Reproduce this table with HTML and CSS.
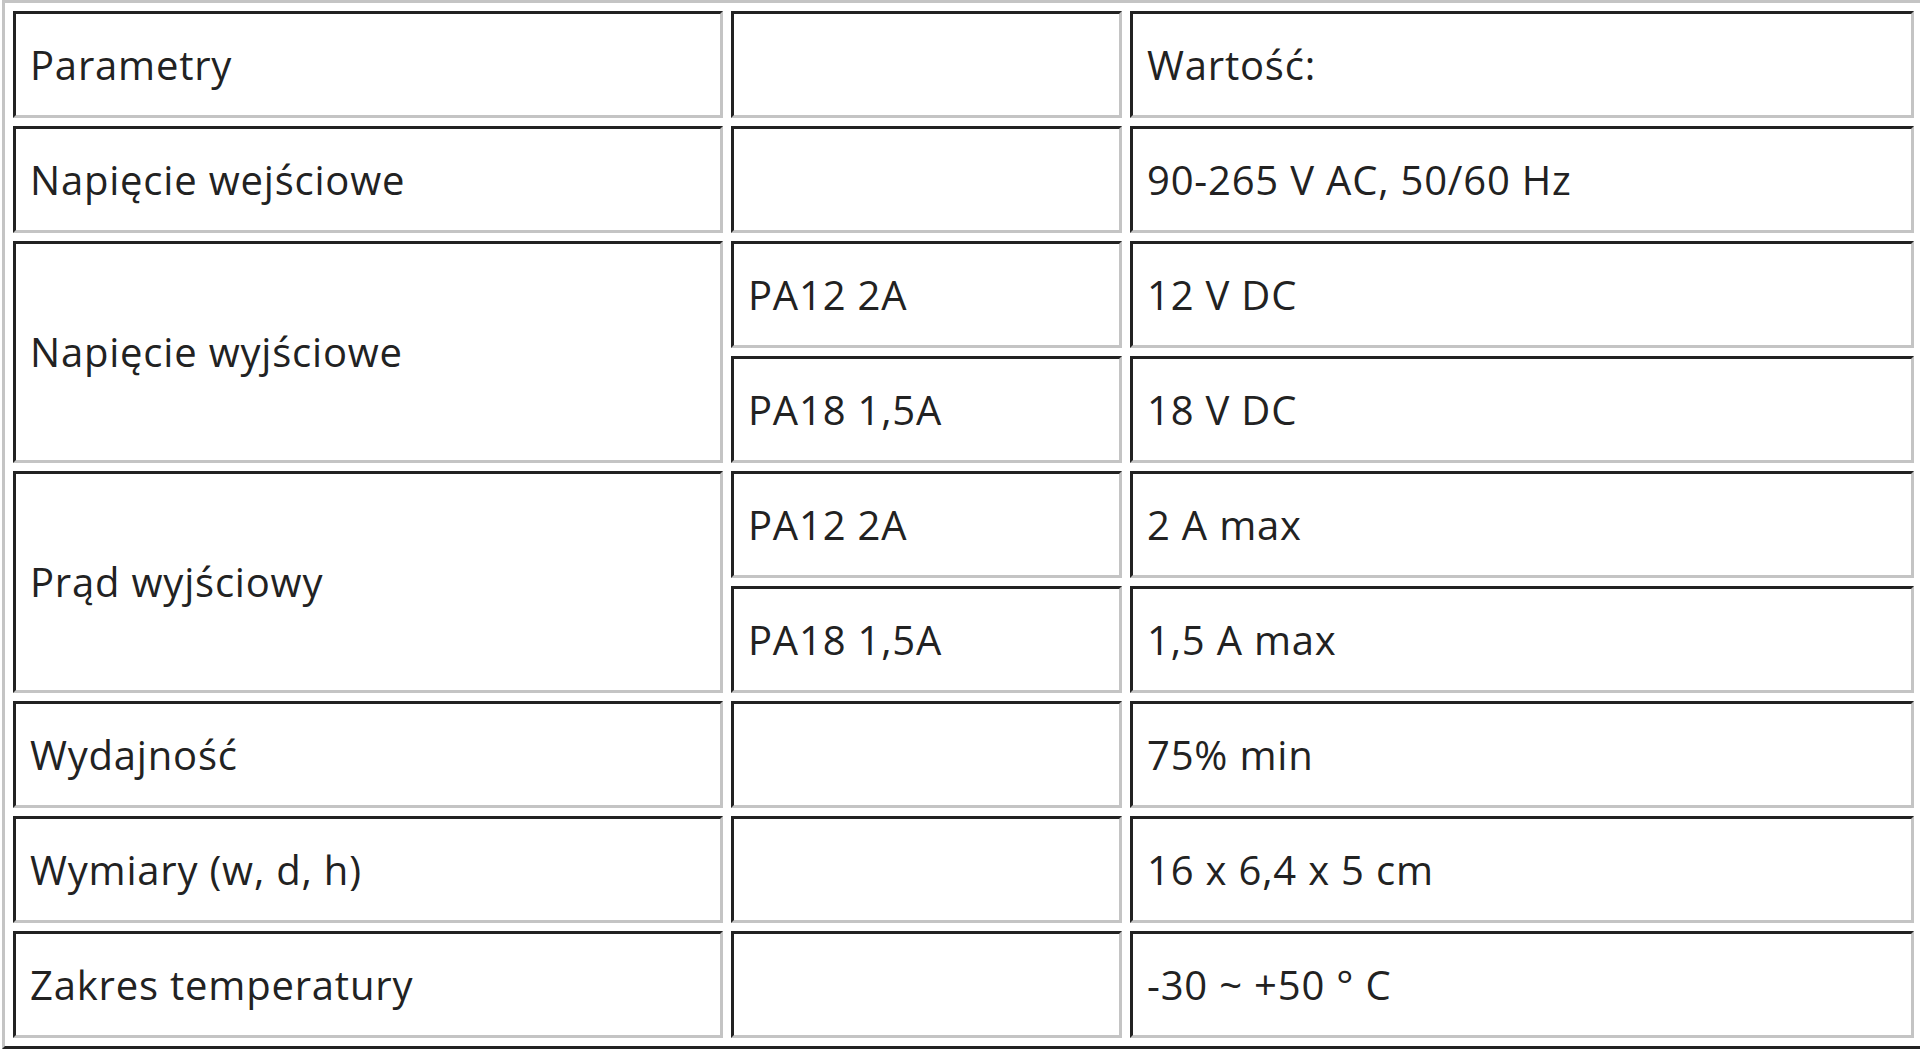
FILE: index.html
```html
<!DOCTYPE html>
<html lang="pl">
<head>
<meta charset="utf-8">
<title>Parametry</title>
<link rel="stylesheet" href="styles.css">
</head>
<body>
<table class="spec">
  <colgroup>
    <col class="c1">
    <col class="c2">
    <col class="c3">
  </colgroup>
  <tbody>
    <tr><td>Parametry</td><td></td><td>Wartość:</td></tr>
    <tr><td>Napięcie wejściowe</td><td></td><td>90-265 V AC, 50/60 Hz</td></tr>
    <tr><td rowspan="2">Napięcie wyjściowe</td><td>PA12 2A</td><td>12 V DC</td></tr>
    <tr><td>PA18 1,5A</td><td>18 V DC</td></tr>
    <tr><td rowspan="2">Prąd wyjściowy</td><td>PA12 2A</td><td>2 A max</td></tr>
    <tr><td>PA18 1,5A</td><td>1,5 A max</td></tr>
    <tr><td>Wydajność</td><td></td><td>75% min</td></tr>
    <tr><td>Wymiary (w, d, h)</td><td></td><td>16 x 6,4 x 5 cm</td></tr>
    <tr><td>Zakres temperatury</td><td></td><td>-30 ~ +50 ° C</td></tr>
  </tbody>
</table>
</body>
</html>
```
FILE: styles.css
```css
html {
  overflow: hidden;
}
body {
  margin: 0;
  background: #ffffff;
  font-family: "Open Sans", "Noto Sans", sans-serif;
  color: #222222;
}
.spec {
  box-sizing: border-box;
  table-layout: fixed;
  width: 1923px;
  margin: 0 0 0 2px;
  border-collapse: separate;
  border-spacing: 8px;
  border-style: solid;
  border-width: 3px;
  border-top-color: #c4c4c4;
  border-left-color: #c4c4c4;
  border-right-color: #222222;
  border-bottom-color: #222222;
}
.c1 { width: 710px; }
.c2 { width: 391px; }
.c3 { width: 784px; }
.spec td {
  box-sizing: border-box;
  height: 107px;
  padding: 0 12px 0 14px;
  font-size: 40px;
  line-height: 54px;
  letter-spacing: 0.8px;
  vertical-align: middle;
  white-space: nowrap;
  border-style: solid;
  border-width: 3px;
  border-top-color: #222222;
  border-left-color: #222222;
  border-right-color: #c4c4c4;
  border-bottom-color: #c4c4c4;
}
```
